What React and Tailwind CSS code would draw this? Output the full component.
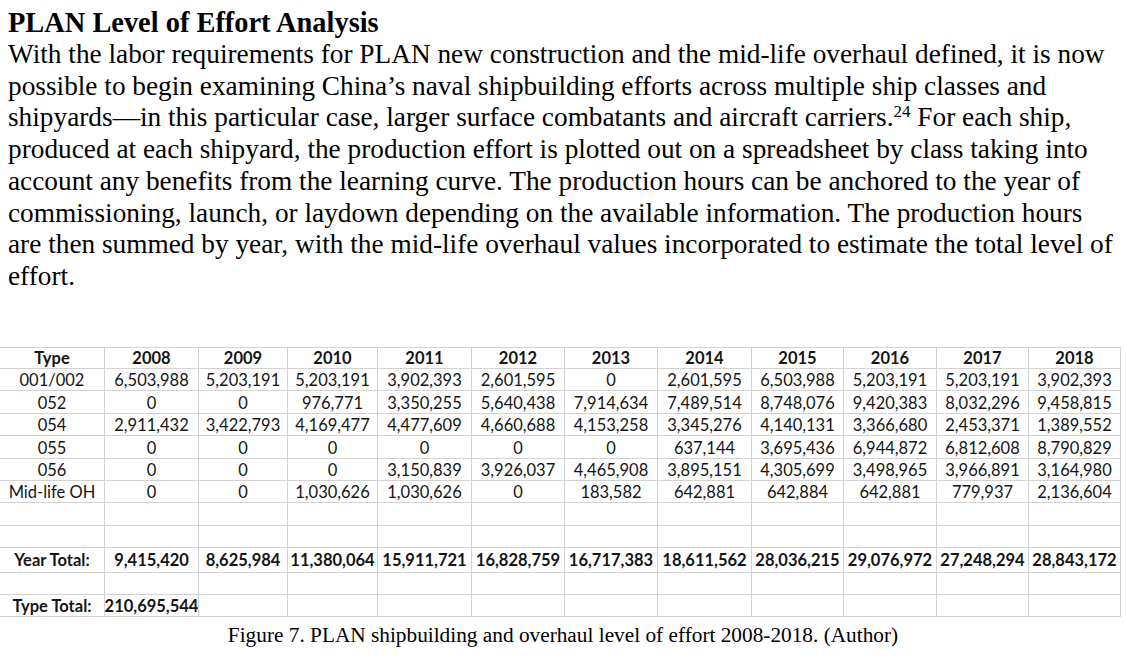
import React from "react";

const years = ["2008","2009","2010","2011","2012","2013","2014","2015","2016","2017","2018"];

const rows = [
  ["001/002","6,503,988","5,203,191","5,203,191","3,902,393","2,601,595","0","2,601,595","6,503,988","5,203,191","5,203,191","3,902,393"],
  ["052","0","0","976,771","3,350,255","5,640,438","7,914,634","7,489,514","8,748,076","9,420,383","8,032,296","9,458,815"],
  ["054","2,911,432","3,422,793","4,169,477","4,477,609","4,660,688","4,153,258","3,345,276","4,140,131","3,366,680","2,453,371","1,389,552"],
  ["055","0","0","0","0","0","0","637,144","3,695,436","6,944,872","6,812,608","8,790,829"],
  ["056","0","0","0","3,150,839","3,926,037","4,465,908","3,895,151","4,305,699","3,498,965","3,966,891","3,164,980"],
  ["Mid-life OH","0","0","1,030,626","1,030,626","0","183,582","642,881","642,884","642,881","779,937","2,136,604"],
];

const empty = Array(12).fill("");
const yearTotal = ["Year Total:","9,415,420","8,625,984","11,380,064","15,911,721","16,828,759","16,717,383","18,611,562","28,036,215","29,076,972","27,248,294","28,843,172"];
const typeTotal = ["Type Total:","210,695,544","","","","","","","","","",""];

function Row({ cells, bold, first, tall }) {
  return (
    <>
      {cells.map((c, i) => (
        <div
          key={i}
          className={
            "pt-[2px] flex items-center justify-center border-b border-[#d2d2d2] whitespace-nowrap " +
            (tall ? "h-[24.4px] " : "h-[22.4px] ") +
            (i === 0 ? "" : "border-l ") +
            (i === 11 ? "border-r " : "") +
            (first ? "border-t " : "") +
            (bold ? "font-bold" : "font-normal")
          }
        >
          {c}
        </div>
      ))}
    </>
  );
}

export default function App() {
  return (
    <div className="w-[1126px] h-[656px] bg-white overflow-hidden text-black">
      <div className="px-2 pt-[6px] font-['Liberation_Serif',serif] text-[27.3px] leading-[31.7px] whitespace-nowrap">
        <div className="font-bold text-[28.4px] leading-[33px]">PLAN Level of Effort Analysis</div>
        <div>With the labor requirements for PLAN new construction and the mid-life overhaul defined, it is now</div>
        <div>possible to begin examining China’s naval shipbuilding efforts across multiple ship classes and</div>
        <div>
          shipyards—in this particular case, larger surface combatants and aircraft carriers.
          <sup className="text-[17px] relative -top-[9px] align-baseline">24</sup> For each ship,
        </div>
        <div>produced at each shipyard, the production effort is plotted out on a spreadsheet by class taking into</div>
        <div>account any benefits from the learning curve. The production hours can be anchored to the year of</div>
        <div>commissioning, launch, or laydown depending on the available information. The production hours</div>
        <div>are then summed by year, with the mid-life overhaul values incorporated to estimate the total level of</div>
        <div>effort.</div>
      </div>

      <div className="mt-[54px] grid grid-cols-[104px_94px_89px_90px_94px_93px_93px_94px_92px_93px_92px_93px] font-['Lato',sans-serif] text-[16.5px] text-[#151515]">
        <Row cells={["Type", ...years]} bold first />
        {rows.map((r, i) => (
          <Row key={i} cells={r} />
        ))}
        <Row cells={empty} />
        <Row cells={empty} />
        <Row cells={yearTotal} bold tall />
        <Row cells={empty} />
        <Row cells={typeTotal} bold />
      </div>

      <div className="mt-[6px] text-center font-['Liberation_Serif',serif] text-[21.3px] leading-[24px]">
        Figure 7. PLAN shipbuilding and overhaul level of effort 2008-2018. (Author)
      </div>
    </div>
  );
}
